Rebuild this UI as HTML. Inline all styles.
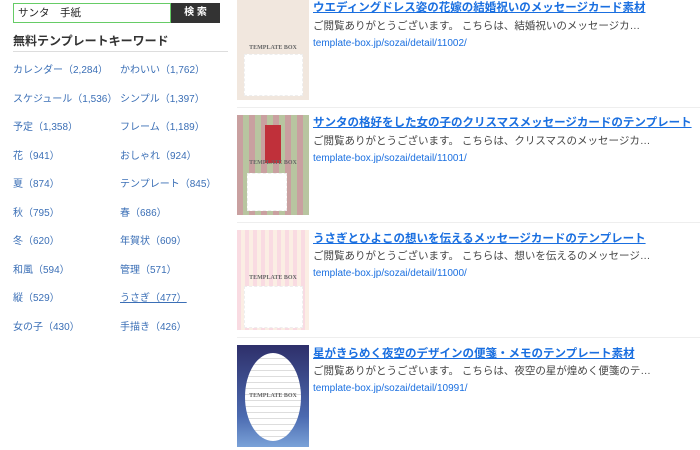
<!DOCTYPE html>
<html><head><meta charset="utf-8"><style>
body{margin:0;width:700px;height:450px;overflow:hidden;background:#fff;font-family:"Liberation Sans","Noto Sans CJK JP",sans-serif;position:relative}
.a{position:absolute}
.kw{position:absolute;font-size:10px;color:#3b6fb6;white-space:nowrap}
.t{position:absolute;left:313px;font-size:11.5px;font-weight:bold;color:#1a6fe0;text-decoration:underline;white-space:nowrap}
.d{position:absolute;left:313px;font-size:10.5px;color:#444;white-space:nowrap}
.u{position:absolute;left:313px;font-size:10px;color:#1a6fe0;white-space:nowrap}
.th{position:absolute;left:237px;width:72px;height:100px;overflow:hidden}
.hr{position:absolute;left:237px;width:463px;height:1px;background:#eee}
.box{position:absolute;left:7px;top:54px;width:57px;height:40px;background:#fff;border:1px dashed #eee}
.tb{position:absolute;left:0;width:72px;text-align:center;font-family:"Liberation Serif",serif;font-size:6px;font-weight:bold;color:#666}
</style></head><body>
<div class="a" style="left:13px;top:3px;width:152px;height:18px;border:1px solid #6c6;font-size:10.5px;line-height:18px;padding-left:4px;color:#222">サンタ　手紙</div>
<div class="a" style="left:171px;top:3px;width:49px;height:20px;background:#333;color:#fff;font-size:10px;font-weight:bold;line-height:20px;text-align:center">検 索</div>
<div class="a" style="left:13px;top:32px;font-size:12px;font-weight:bold;color:#333">無料テンプレートキーワード</div>
<div class="a" style="left:13px;top:51px;width:215px;height:1px;background:#ddd"></div>
<div class="kw" style="left:13px;top:61px">カレンダー（2,284）</div><div class="kw" style="left:120px;top:61px">かわいい（1,762）</div>
<div class="kw" style="left:13px;top:90px">スケジュール（1,536）</div><div class="kw" style="left:120px;top:90px">シンプル（1,397）</div>
<div class="kw" style="left:13px;top:118px">予定（1,358）</div><div class="kw" style="left:120px;top:118px">フレーム（1,189）</div>
<div class="kw" style="left:13px;top:147px">花（941）</div><div class="kw" style="left:120px;top:147px">おしゃれ（924）</div>
<div class="kw" style="left:13px;top:175px">夏（874）</div><div class="kw" style="left:120px;top:175px">テンプレート（845）</div>
<div class="kw" style="left:13px;top:204px">秋（795）</div><div class="kw" style="left:120px;top:204px">春（686）</div>
<div class="kw" style="left:13px;top:232px">冬（620）</div><div class="kw" style="left:120px;top:232px">年賀状（609）</div>
<div class="kw" style="left:13px;top:261px">和風（594）</div><div class="kw" style="left:120px;top:261px">管理（571）</div>
<div class="kw" style="left:13px;top:289px">縦（529）</div><div class="kw" style="left:120px;top:289px;text-decoration:underline">うさぎ（477）</div>
<div class="kw" style="left:13px;top:318px">女の子（430）</div><div class="kw" style="left:120px;top:318px">手描き（426）</div>

<div class="th" style="top:0;background:#f1e7de"><div class="tb" style="top:45px">TEMPLATE BOX</div><div class="box"></div></div>
<div class="t" style="top:-1px">ウエディングドレス姿の花嫁の結婚祝いのメッセージカード素材</div>
<div class="d" style="top:18px">ご閲覧ありがとうございます。 こちらは、結婚祝いのメッセージカ…</div>
<div class="u" style="top:38px">template-box.jp/sozai/detail/11002/</div>
<div class="hr" style="top:107px"></div>

<div class="th" style="top:115px;background:repeating-linear-gradient(90deg,#c9a0a0 0 6px,#b8c5a0 6px 12px)"><div class="a" style="left:28px;top:10px;width:16px;height:38px;background:#c0303a"></div><div class="tb" style="top:45px">TEMPLATE BOX</div><div class="box" style="top:58px;left:10px;width:38px;height:36px"></div></div>
<div class="t" style="top:114px">サンタの格好をした女の子のクリスマスメッセージカードのテンプレート</div>
<div class="d" style="top:133px">ご閲覧ありがとうございます。 こちらは、クリスマスのメッセージカ…</div>
<div class="u" style="top:153px">template-box.jp/sozai/detail/11001/</div>
<div class="hr" style="top:222px"></div>

<div class="th" style="top:230px;background:repeating-linear-gradient(90deg,#f9dbe2 0 4px,#fbeee4 4px 8px)"><div class="tb" style="top:45px">TEMPLATE BOX</div><div class="box" style="top:56px;left:7px;height:40px"></div></div>
<div class="t" style="top:230px">うさぎとひよこの想いを伝えるメッセージカードのテンプレート</div>
<div class="d" style="top:248px">ご閲覧ありがとうございます。 こちらは、想いを伝えるのメッセージ…</div>
<div class="u" style="top:268px">template-box.jp/sozai/detail/11000/</div>
<div class="hr" style="top:337px"></div>

<div class="th" style="top:345px;height:102px;background:linear-gradient(#2e2f6a,#4b6ab0 70%,#7aa2d8)"><div class="a" style="left:8px;top:8px;width:56px;height:88px;border-radius:50%;background:repeating-linear-gradient(#fff 0 5px,#ddd 5px 6px)"></div><div class="tb" style="top:48px">TEMPLATE BOX</div></div>
<div class="t" style="top:345px">星がきらめく夜空のデザインの便箋・メモのテンプレート素材</div>
<div class="d" style="top:363px">ご閲覧ありがとうございます。 こちらは、夜空の星が煌めく便箋のテ…</div>
<div class="u" style="top:383px">template-box.jp/sozai/detail/10991/</div>
</body></html>
